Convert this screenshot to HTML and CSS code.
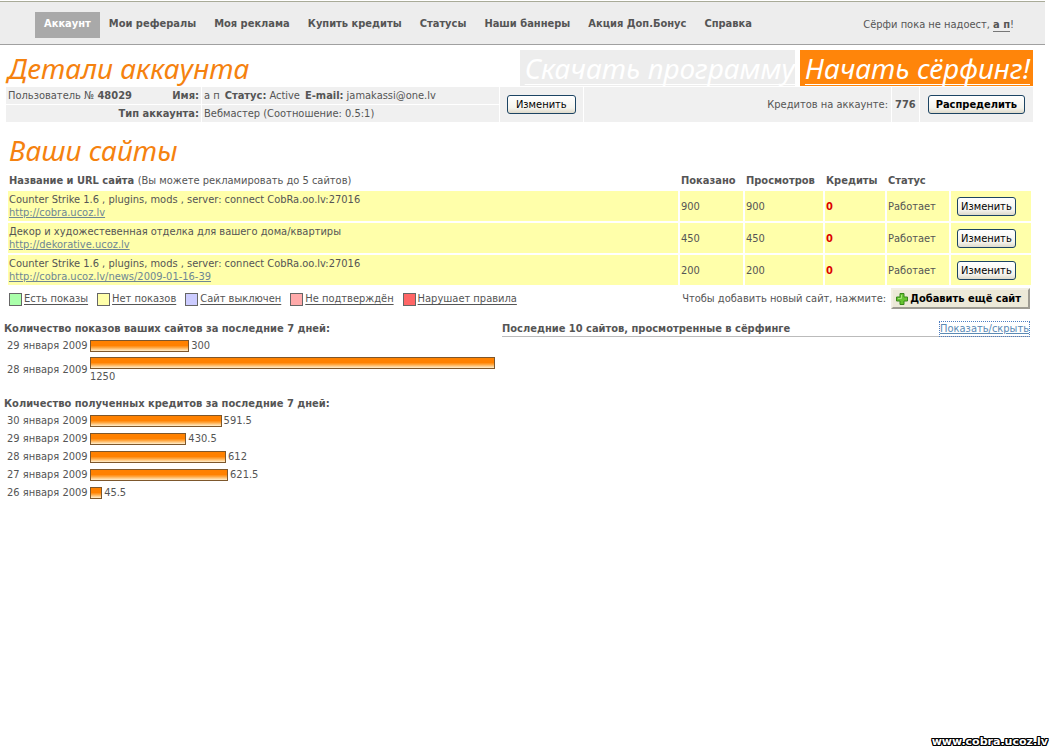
FILE: index.html
```html
<!DOCTYPE html>
<html lang="ru">
<head>
<meta charset="utf-8">
<title>Детали аккаунта</title>
<link rel="stylesheet" href="styles.css">
</head>
<body>
<header class="topbar">
  <nav class="nav">
    <a class="nav-item active" href="#">Аккаунт</a>
    <a class="nav-item" href="#">Мои рефералы</a>
    <a class="nav-item" href="#">Моя реклама</a>
    <a class="nav-item" href="#">Купить кредиты</a>
    <a class="nav-item" href="#">Статусы</a>
    <a class="nav-item" href="#">Наши баннеры</a>
    <a class="nav-item" href="#">Акция Доп.Бонус</a>
    <a class="nav-item" href="#">Справка</a>
  </nav>
  <p class="greeting">Сёрфи пока не надоест, <a href="#">а п</a>!</p>
</header>
<main class="page">
  <div class="title-row">
    <h1 class="title">Детали аккаунта</h1>
    <div class="actions">
      <a class="action download" href="#">Скачать программу</a>
      <a class="action start" href="#">Начать сёрфинг!</a>
    </div>
  </div>

  <section class="account">
    <div class="account-grid">
      <div class="cell user"><span>Пользователь № <b>48029</b></span><b>Имя:</b></div>
      <div class="cell"><span>а п</span><b>Статус:</b><span class="state">Active</span><b>E-mail:</b><span class="state">jamakassi@one.lv</span></div>
      <div class="cell kind"><b>Тип аккаунта:</b></div>
      <div class="cell">Вебмастер (Соотношение: 0.5:1)</div>
    </div>
    <div class="cell edit"><button class="btn" type="button">Изменить</button></div>
    <div class="cell credits">Кредитов на аккаунте:</div>
    <div class="cell amount"><b>776</b></div>
    <div class="cell share"><button class="btn strong" type="button">Распределить</button></div>
  </section>

  <section class="sites">
    <h2 class="title">Ваши сайты</h2>
    <table class="sites-table">
      <thead>
        <tr>
          <th class="c-name">Название и URL сайта <span class="note">(Вы можете рекламировать до 5 сайтов)</span></th>
          <th class="c-shown">Показано</th>
          <th class="c-views">Просмотров</th>
          <th class="c-credits">Кредиты</th>
          <th class="c-status">Статус</th>
          <th class="c-edit"></th>
        </tr>
      </thead>
      <tbody>
        <tr>
          <td>Counter Strike 1.6 , plugins, mods , server: connect CobRa.oo.lv:27016<br><a href="#">http://cobra.ucoz.lv</a></td>
          <td>900</td><td>900</td><td class="zero">0</td><td>Работает</td>
          <td class="tools"><button class="btn small" type="button">Изменить</button></td>
        </tr>
        <tr>
          <td>Декор и художестевенная отделка для вашего дома/квартиры<br><a href="#">http://dekorative.ucoz.lv</a></td>
          <td>450</td><td>450</td><td class="zero">0</td><td>Работает</td>
          <td class="tools"><button class="btn small" type="button">Изменить</button></td>
        </tr>
        <tr>
          <td>Counter Strike 1.6 , plugins, mods , server: connect CobRa.oo.lv:27016<br><a href="#">http://cobra.ucoz.lv/news/2009-01-16-39</a></td>
          <td>200</td><td>200</td><td class="zero">0</td><td>Работает</td>
          <td class="tools"><button class="btn small" type="button">Изменить</button></td>
        </tr>
      </tbody>
    </table>
    <div class="sites-foot">
      <ul class="legend">
        <li><i class="swatch green"></i><span>Есть показы</span></li>
        <li><i class="swatch yellow"></i><span>Нет показов</span></li>
        <li><i class="swatch blue"></i><span>Сайт выключен</span></li>
        <li><i class="swatch pink"></i><span>Не подтверждён</span></li>
        <li><i class="swatch red"></i><span>Нарушает правила</span></li>
      </ul>
      <div class="add">
        <span>Чтобы добавить новый сайт, нажмите:</span>
        <button class="add-btn" type="button">
          <svg width="14" height="14" viewBox="0 0 14 14" aria-hidden="true"><path d="M5 1.500h4v3.500h3.500v4H9v3.500H5V9H1.500V5H5z" fill="#66c430" stroke="#38871b"/><path d="M6.500 3v3.500H3" fill="none" stroke="#a5e47a"/></svg>Добавить ещё сайт</button>
      </div>
    </div>
  </section>

  <div class="stats">
    <div class="charts">
      <section class="chart">
        <h3>Количество показов ваших сайтов за последние 7 дней:</h3>
        <div class="row"><span class="date">29 января 2009</span><div class="plot"><div class="bar" style="width:24%"></div><span>300</span></div></div>
        <div class="row full"><span class="date">28 января 2009</span><div class="plot"><div class="bar" style="width:100%"></div><span class="under">1250</span></div></div>
      </section>
      <section class="chart">
        <h3>Количество полученных кредитов за последние 7 дней:</h3>
        <div class="row"><span class="date">30 января 2009</span><div class="plot"><div class="bar" style="width:32%"></div><span>591.5</span></div></div>
        <div class="row"><span class="date">29 января 2009</span><div class="plot"><div class="bar" style="width:23.3%"></div><span>430.5</span></div></div>
        <div class="row"><span class="date">28 января 2009</span><div class="plot"><div class="bar" style="width:33.1%"></div><span>612</span></div></div>
        <div class="row"><span class="date">27 января 2009</span><div class="plot"><div class="bar" style="width:33.6%"></div><span>621.5</span></div></div>
        <div class="row"><span class="date">26 января 2009</span><div class="plot"><div class="bar" style="width:2.5%"></div><span>45.5</span></div></div>
      </section>
    </div>
    <section class="recent">
      <h3>Последние 10 сайтов, просмотренные в сёрфинге</h3>
      <a class="toggle" href="#">Показать/скрыть</a>
    </section>
  </div>
</main>
<div class="watermark">www.cobra.ucoz.lv</div>
</body>
</html>
```
FILE: styles.css
```css
body {
  margin: 0;
  min-height: 100vh;
  position: relative;
  background: #fff;
  color: #555;
  font: 11px/14px Tahoma, "DejaVu Sans Condensed", "DejaVu Sans", sans-serif;
}
h1, h2, h3, p, ul { margin: 0; padding: 0; }
h3 { font-size: 11px; line-height: 16px; }

.topbar {
  display: flex;
  justify-content: space-between;
  align-items: center;
  margin: 1px 8px 0 0;
  padding: 10px 31px 6px 35px;
  background: #ededed;
  border-top: 1px solid #a9ab98;
  border-bottom: 1px solid #a0a0a0;
}
.nav { display: flex; }
.nav-item {
  padding: 5px 9px 7px;
  color: #555;
  font-weight: bold;
  text-decoration: none;
  white-space: nowrap;
}
.nav-item.active { background: #a9a9a9; color: #fff; }
.greeting a {
  color: #555;
  font-weight: bold;
  text-decoration: none;
  border-bottom: 1px solid #777;
}

.page { padding: 5px 20px 0 6px; }
.title {
  color: #f5820f;
  font: italic 28px/36px "Trebuchet MS", "Noto Sans", sans-serif;
}
.title-row { display: flex; justify-content: space-between; padding-left: 2px; }
.actions { display: flex; gap: 5px; }
.action {
  padding-left: 5px;
  color: #fff;
  font: italic 28px/36px "Trebuchet MS", "Noto Sans", sans-serif;
  text-decoration: underline;
  text-decoration-thickness: 1px;
  text-underline-offset: 5px;
  text-decoration-skip-ink: none;
  white-space: nowrap;
}
.download { background: #ededed; }
.start { background: #ff850a; padding-right: 3px; }

.account { display: flex; gap: 1px; margin-top: 1px; }
.account-grid {
  display: grid;
  flex: 0 0 48%;
  grid-template-columns: 195px 1fr;
  gap: 1px;
}
.cell {
  display: flex;
  align-items: center;
  gap: 5px;
  padding: 1px 2px;
  min-height: 15px;
  background: #f0f0f0;
}
.user { justify-content: space-between; }
.kind { justify-content: flex-end; }
.state { margin-left: -2px; }
.edit { padding: 0 7px; }
.credits { flex: 1; justify-content: flex-end; padding-right: 3px; }
.amount { padding: 0 3px; }
.share { padding: 0 8px; }

.btn {
  height: 19px;
  padding: 0 8px;
  border: 1px solid #1c4463;
  border-radius: 3px;
  background: linear-gradient(#fff, #f5f4ee 70%, #dedacb);
  color: #000;
  font: 11px/15px Tahoma, "DejaVu Sans Condensed", "DejaVu Sans", sans-serif;
}
.strong { font-weight: bold; padding: 0 7px; }
.small { padding: 0 3px; }

.sites { padding: 10px 0 0; }
.sites .title { padding-left: 3px; }
.sites-table {
  width: 100%;
  table-layout: fixed;
  border-spacing: 2px;
}
.sites-table th { padding: 3px 1px 0; text-align: left; white-space: nowrap; line-height: 16px; }
.note { font-weight: normal; }
.sites-table td { height: 28px; padding: 1px; background: #ffa; line-height: 13px; }
.sites-table a { color: #6e8794; }
.sites-table .c-shown { width: 61px; }
.sites-table .c-views { width: 76px; }
.sites-table .c-credits { width: 58px; }
.sites-table .c-status { width: 60px; }
.sites-table .c-edit { width: 78px; }
.sites-table .zero { color: #d00; font-weight: bold; }
.sites-table .tools { padding-left: 6px; }

.sites-foot { display: flex; justify-content: space-between; padding: 1px 3px 0; }
.legend { display: flex; gap: 9px; list-style: none; padding-top: 4px; }
.legend li { display: flex; gap: 2px; text-decoration: underline; text-underline-offset: 2px; }
.swatch { width: 11px; height: 11px; margin-top: 1px; border: 1px solid #666; }
.green { background: #afa; }
.yellow { background: #ffa; }
.blue { background: #ccf; }
.pink { background: #faa; }
.red { background: #f66; }
.add { display: flex; align-items: center; gap: 5px; }
.add-btn {
  display: flex;
  align-items: center;
  gap: 1px;
  height: 21px;
  padding: 0 7px 0 2px;
  border: 2px outset #f2efe2;
  background: #ece9d8;
  color: #000;
  font: bold 11px/15px Tahoma, "DejaVu Sans Condensed", "DejaVu Sans", sans-serif;
}

.stats { display: flex; margin: 12px 0 0 -2px; }
.charts { flex: 0 0 491px; padding-right: 7px; }
.chart { margin-bottom: 11px; }
.row { display: flex; align-items: center; padding: 1px 0 1px 3px; }
.full { padding: 2px 0 2px 3px; }
.date { flex: 0 0 83px; line-height: 16px; white-space: nowrap; }
.plot { flex: 1; display: flex; flex-wrap: wrap; align-items: center; gap: 1px 2px; }
.bar {
  height: 10px;
  border: 1px solid #7d572c;
  background: linear-gradient(#ff8100 45%, #ffa53d 65%, #fff0cf);
}
.under { line-height: 13px; }
.recent {
  display: flex;
  flex: 1;
  justify-content: space-between;
  align-self: flex-start;
  margin: 1px 4px 0 0;
  border-bottom: 1px solid #bbb;
}
.recent h3 { line-height: 14px; }
.toggle { color: #5b8ab5; outline: 1px dotted #4d7dc0; }

.watermark {
  position: absolute;
  right: 5px;
  bottom: 3px;
  color: #fff;
  font: bold 11px/14px Verdana, "DejaVu Sans", sans-serif;
  text-shadow: 1px 0 #000, -1px 0 #000, 0 1px #000, 0 -1px #000, 1px 1px #000, -1px -1px #000, 1px -1px #000, -1px 1px #000;
}
```
